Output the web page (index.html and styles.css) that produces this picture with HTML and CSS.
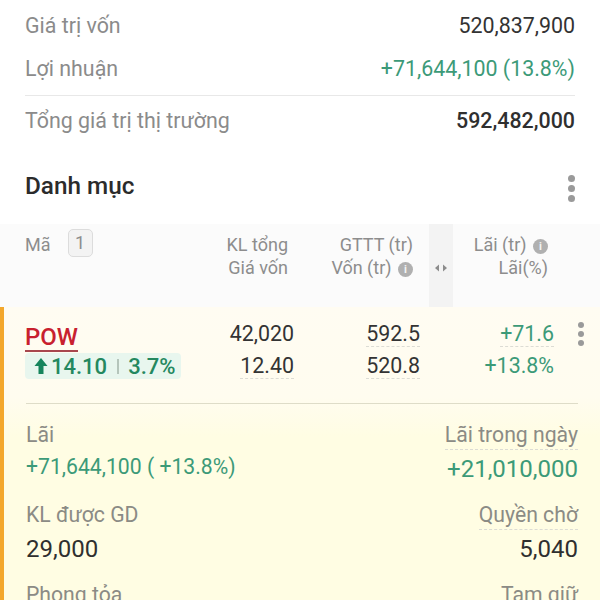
FILE: index.html
```html
<!DOCTYPE html>
<html lang="vi">
<head>
    <meta charset="UTF-8">
    <meta name="viewport" content="width=device-width, initial-scale=1.0">
    <title>Danh mục</title>
    <link rel="stylesheet" href="styles.css">
</head>
<body>
    <div class="summary">
        <div class="summary-row first">
            <span class="label">Giá trị vốn</span>
            <span class="value">520,837,900</span>
        </div>
        <div class="summary-row second">
            <span class="label">Lợi nhuận</span>
            <span class="value green">+71,644,100 (13.8%)</span>
        </div>
        <div class="summary-row total">
            <span class="label">Tổng giá trị thị trường</span>
            <span class="value strong">592,482,000</span>
        </div>
    </div>

    <div class="section-title">
        <h2>Danh mục</h2>
        <span class="dots"><i></i><i></i><i></i></span>
    </div>

    <div class="table-head">
        <div class="head-code">
            <span>Mã</span>
            <span class="count">1</span>
        </div>
        <div class="head-col col-volume">
            <div>KL tổng</div>
            <div>Giá vốn</div>
        </div>
        <div class="head-col col-market">
            <div>GTTT (tr)</div>
            <div>Vốn (tr) <span class="info">i</span></div>
        </div>
        <div class="scroller">
            <svg width="12" height="8" viewBox="0 0 12 8"><path d="M0 4l4-3.500v7zM12 4l-4-3.500v7z" fill="#8c8c8c"/></svg>
        </div>
        <div class="head-col col-profit">
            <div>Lãi (tr) <span class="info">i</span></div>
            <div>Lãi(%)</div>
        </div>
    </div>

    <div class="holding">
        <div class="holding-row">
            <div class="code-cell">
                <span class="code">POW</span>
                <span class="chip">
                    <svg width="14" height="16" viewBox="0 0 14 16"><path d="M7 0l6.500 8H9.500v8h-5V8H.5z" fill="#16845c"/></svg>
                    <span>14.10</span>
                    <span class="chip-sep"></span>
                    <span>3.7%</span>
                </span>
            </div>
            <div class="num-col num-volume">
                <div>42,020</div>
                <div><span class="dashed">12.40</span></div>
            </div>
            <div class="num-col num-market">
                <div><span class="dashed">592.5</span></div>
                <div><span class="dashed">520.8</span></div>
            </div>
            <div class="num-col num-profit green">
                <div><span class="dashed">+71.6</span></div>
                <div>+13.8%</div>
            </div>
            <span class="dots row-dots"><i></i><i></i><i></i></span>
        </div>

        <div class="detail">
            <div class="detail-row">
                <div>
                    <div class="detail-label">Lãi</div>
                    <div class="detail-value small green">+71,644,100 ( +13.8%)</div>
                </div>
                <div class="right">
                    <div class="detail-label"><span class="dashed">Lãi trong ngày</span></div>
                    <div class="detail-value green">+21,010,000</div>
                </div>
            </div>
            <div class="detail-row">
                <div>
                    <div class="detail-label">KL được GD</div>
                    <div class="detail-value">29,000</div>
                </div>
                <div class="right">
                    <div class="detail-label"><span class="dashed">Quyền chờ</span></div>
                    <div class="detail-value">5,040</div>
                </div>
            </div>
            <div class="detail-row">
                <div>
                    <div class="detail-label">Phong tỏa</div>
                </div>
                <div class="right">
                    <div class="detail-label">Tạm giữ</div>
                </div>
            </div>
        </div>
    </div>
</body>
</html>
```
FILE: styles.css
```css
* {
    font-family: Roboto, sans-serif;
    box-sizing: border-box;
}

html, body {
    height: 600px;
    overflow: hidden;
}

body {
    margin: 0;
    background-color: #fff;
    color: #333;
}

.green {
    color: #3c9a78;
}

.summary {
    padding: 0 25px;
}

.summary-row {
    display: flex;
    justify-content: space-between;
    align-items: center;
    font-size: 21.400px;
}

.summary-row.first {
    height: 50px;
}

.summary-row.second {
    height: 36px;
    margin-bottom: 9px;
}

.summary-row.total {
    height: 50px;
    border-top: 1px solid #e8e8e8;
}

.label {
    color: #8b8b8b;
}

.value.strong {
    font-weight: 500;
    color: #2f2f2f;
}

.section-title {
    display: flex;
    justify-content: space-between;
    align-items: center;
    padding: 0 25px;
    margin-top: 16px;
    height: 48px;
}

.section-title h2 {
    margin: 0;
    font-size: 24.300px;
    font-weight: 500;
    color: #2b2b2b;
}

.dots {
    display: flex;
    flex-direction: column;
    gap: 3px;
}

.section-title .dots {
    margin-top: 7px;
}

.dots i {
    display: block;
    width: 7px;
    height: 7px;
    border-radius: 50%;
    background-color: #9a9a9a;
}

.table-head {
    display: flex;
    height: 83px;
    margin-top: 15px;
    padding-left: 25px;
    background-color: #fbfbfb;
    color: #8d8d8d;
    font-size: 18px;
    line-height: 23px;
}

.head-code {
    display: flex;
    align-items: flex-start;
    gap: 17px;
    width: 200px;
    padding-top: 9px;
}

.count {
    width: 25px;
    height: 28px;
    margin-top: -4px;
    border: 1px solid #dcdcdc;
    border-radius: 5px;
    background-color: #f3f3f3;
    text-align: center;
    line-height: 26px;
}

.head-col {
    padding-top: 9px;
    text-align: right;
    white-space: nowrap;
}

.col-volume {
    width: 63px;
}

.col-market {
    width: 125px;
}

.col-profit {
    width: 95px;
}

.scroller {
    display: flex;
    align-items: center;
    justify-content: center;
    width: 24px;
    margin-left: 16px;
    padding-top: 4px;
    background-color: #f3f3f3;
}

.info {
    display: inline-block;
    width: 15px;
    height: 15px;
    margin-left: 2px;
    border-radius: 50%;
    background-color: #b0b0b0;
    color: #f4f4f4;
    font-size: 11px;
    font-weight: 700;
    line-height: 15px;
    text-align: center;
    vertical-align: 1px;
}

.holding {
    height: 293px;
    border-left: 4px solid #f3a72c;
    background: linear-gradient(#fffcf2 0, #fffcef 90px, #fffde3 130px);
}

.holding-row {
    display: flex;
    height: 96px;
    padding-left: 21px;
    padding-top: 11px;
    position: relative;
}

.code-cell {
    width: 200px;
}

.code {
    display: block;
    width: 53px;
    height: 34px;
    border-bottom: 2px solid #a8474e;
    color: #c8202f;
    font-size: 24px;
    font-weight: 500;
    line-height: 39px;
}

.chip {
    display: inline-flex;
    align-items: center;
    gap: 3px;
    height: 26px;
    margin-top: 1px;
    padding: 0 6px 0 9px;
    border-radius: 4px;
    background-color: #e8f6ee;
    color: #24885f;
    font-size: 22px;
    font-weight: 500;
    white-space: nowrap;
}

.chip-sep {
    width: 2px;
    height: 15px;
    margin: 0 6px 0 7px;
    background-color: #b5c5bb;
}

.num-col {
    font-size: 21.400px;
    line-height: 32px;
    text-align: right;
    white-space: nowrap;
}

.num-volume {
    width: 69px;
}

.num-market {
    width: 126px;
}

.num-profit {
    width: 134px;
}

.dashed {
    display: inline-block;
    border-bottom: 1px dashed #dcdcd4;
    line-height: 25px;
}

.row-dots {
    position: absolute;
    top: 15px;
    right: 16px;
    gap: 3px;
}

.row-dots i {
    width: 6px;
    height: 6px;
}

.detail {
    margin: 0 22px;
    border-top: 1px solid #dedcc8;
    padding-top: 16px;
}

.detail-row {
    display: flex;
    justify-content: space-between;
    height: 80px;
}

.right {
    text-align: right;
}

.detail-label {
    height: 31px;
    color: #8b8b85;
    font-size: 21.200px;
    line-height: 30px;
}

.detail-label .dashed {
    line-height: 29px;
}

.detail-value {
    color: #2f2f2f;
    font-size: 24px;
    line-height: 36px;
}

.detail-value.green {
    color: #3c9a78;
}

.detail-value.small {
    font-size: 21.200px;
    line-height: 32px;
}
```
